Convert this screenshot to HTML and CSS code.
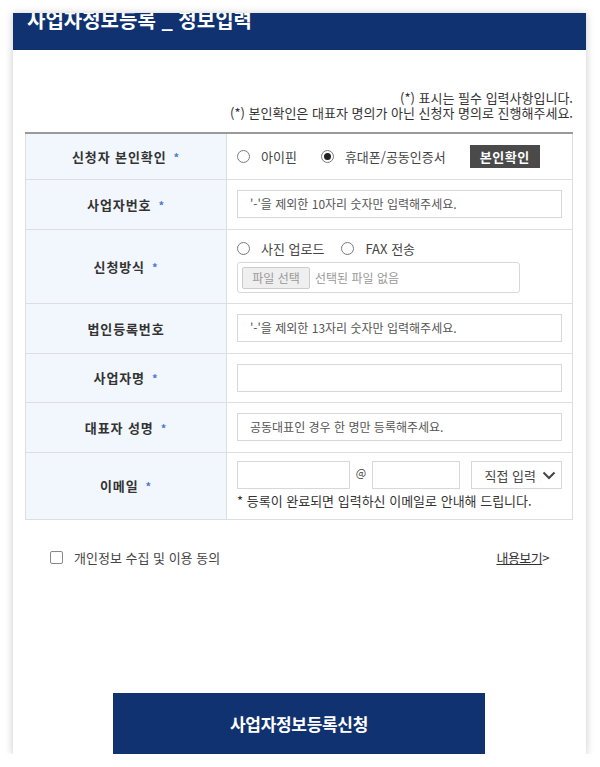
FILE: index.html
```html
<!DOCTYPE html>
<html lang="ko">
<head>
<meta charset="utf-8">
<title>사업자정보등록 _ 정보입력</title>
<link rel="stylesheet" href="styles.css">
</head>
<body>
<div class="card">
  <div class="card-head">
    <h1 class="title">사업자정보등록 _ 정보입력</h1>
  </div>
  <div class="card-body">
    <div class="notes">
      <p>(*) 표시는 필수 입력사항입니다.</p>
      <p>(*) 본인확인은 대표자 명의가 아닌 신청자 명의로 진행해주세요.</p>
    </div>
    <table class="form">
      <tr class="r1">
        <th>신청자 본인확인<span class="req">*</span></th>
        <td>
          <div class="radios">
            <label class="radio-item"><span class="radio"></span>아이핀</label>
            <label class="radio-item"><span class="radio on"></span>휴대폰/공동인증서</label>
            <span class="btn-verify">본인확인</span>
          </div>
        </td>
      </tr>
      <tr class="r2">
        <th>사업자번호<span class="req">*</span></th>
        <td><div class="input ph">'-'을 제외한 10자리 숫자만 입력해주세요.</div></td>
      </tr>
      <tr class="r3">
        <th>신청방식<span class="req">*</span></th>
        <td>
          <div class="radios radios-sm">
            <label class="radio-item"><span class="radio"></span>사진 업로드</label>
            <label class="radio-item"><span class="radio"></span>FAX 전송</label>
          </div>
          <div class="file">
            <span class="file-btn">파일 선택</span>
            <span class="file-name">선택된 파일 없음</span>
          </div>
        </td>
      </tr>
      <tr class="r4">
        <th>법인등록번호</th>
        <td><div class="input ph">'-'을 제외한 13자리 숫자만 입력해주세요.</div></td>
      </tr>
      <tr class="r5">
        <th>사업자명<span class="req">*</span></th>
        <td><div class="input"></div></td>
      </tr>
      <tr class="r6">
        <th>대표자 성명<span class="req">*</span></th>
        <td><div class="input ph">공동대표인 경우 한 명만 등록해주세요.</div></td>
      </tr>
      <tr class="r7">
        <th>이메일<span class="req">*</span></th>
        <td>
          <div class="email">
            <div class="input mail-id"></div>
            <span class="at">@</span>
            <div class="input mail-domain"></div>
            <div class="select">
              <span>직접 입력</span>
              <svg width="14" height="9" viewBox="0 0 14 9"><polyline points="1.5,1.5 7,7 12.5,1.5" fill="none" stroke="#444" stroke-width="2"/></svg>
            </div>
          </div>
          <p class="mail-note">* 등록이 완료되면 입력하신 이메일로 안내해 드립니다.</p>
        </td>
      </tr>
    </table>
    <div class="agree">
      <label class="agree-label"><span class="checkbox"></span>개인정보 수집 및 이용 동의</label>
      <span class="more"><u>내용보기</u>&gt;</span>
    </div>
    <div class="submit-wrap">
      <span class="submit">사업자정보등록신청</span>
    </div>
  </div>
</div>
</body>
</html>
```

FILE: styles.css
```css
* { box-sizing: border-box; }
html, body {
  margin: 0;
  padding: 0;
  background: #fff;
}
body {
  font-family: "Noto Sans CJK KR", "Noto Sans", sans-serif;
  color: #333;
  font-size: 12px;
}
p { margin: 0; }

.card {
  margin: 13px 0 0 13px;
  width: 573px;
  background: #fff;
  box-shadow: 0 1px 8px rgba(0, 0, 0, 0.22);
}
.card-head {
  height: 37px;
  background: #113270;
  overflow: hidden;
}
.title {
  margin: -3px 0 0 0;
  padding-left: 14px;
  font-size: 20px;
  line-height: 20px;
  font-weight: 700;
  color: #fff;
  letter-spacing: 0;
  white-space: nowrap;
}
.card-body {
  padding: 40px 13px 0 12px;
}
.notes {
  text-align: right;
  font-size: 13px;
  line-height: 15px;
  color: #333;
  letter-spacing: 0;
}

.form {
  margin-top: 12px;
  width: 548px;
  border-collapse: collapse;
  border: 1px solid #dedede;
  border-top: 2px solid #9a9a9a;
}
.form th {
  width: 202px;
  background: #f2f6fd;
  border-right: 1px solid #dedede;
  border-bottom: 1px solid #dedede;
  font-size: 13px;
  font-weight: 700;
  color: #333;
  text-align: center;
  padding: 0;
  letter-spacing: 0.9px;
}
.form td {
  border-bottom: 1px solid #dedede;
  padding: 0 10px;
  vertical-align: middle;
}
.req {
  color: #4a78d2;
  font-size: 11px;
  margin-left: 7px;
  font-weight: 700;
}
.r1 { height: 46px; }
.r2 { height: 50px; }
.r3 { height: 74px; }
.r4 { height: 50px; }
.r5 { height: 49px; }
.r6 { height: 50px; }
.r7 { height: 67px; }

.radios {
  display: flex;
  align-items: center;
}
.radio-item {
  display: flex;
  align-items: center;
  font-size: 13px;
  color: #444;
  margin-right: 24px;
}
.radios-sm .radio-item { margin-right: 17px; }
.radio {
  width: 13px;
  height: 13px;
  border: 1px solid #7a7a7a;
  border-radius: 50%;
  margin-right: 11px;
  background: #fff;
  position: relative;
}
.radio.on::after {
  content: "";
  position: absolute;
  left: 2px;
  top: 2px;
  width: 7px;
  height: 7px;
  border-radius: 50%;
  background: #222;
}
.btn-verify {
  background: #4a4a4a;
  color: #fff;
  font-size: 13px;
  font-weight: 700;
  height: 23px;
  line-height: 23px;
  width: 70px;
  text-align: center;
  letter-spacing: 0.5px;
}

.input {
  height: 28px;
  border: 1px solid #d8d8d8;
  background: #fff;
  padding: 0 12px;
  font-size: 12px;
  line-height: 26px;
  color: #555;
  letter-spacing: 0;
}

.file {
  margin-top: 4px;
  width: 283px;
  height: 31px;
  border: 1px solid #d8d8d8;
  border-radius: 3px;
  display: flex;
  align-items: center;
  padding-left: 4px;
}
.file-btn {
  width: 68px;
  height: 22px;
  line-height: 20px;
  border: 1px solid #ccc;
  border-radius: 2px;
  background: #efefef;
  color: #999;
  font-size: 12px;
  text-align: center;
}
.file-name {
  color: #999;
  font-size: 12px;
  margin-left: 5px;
}

.email {
  display: flex;
  align-items: center;
}
.mail-id { width: 113px; }
.at {
  width: 22px;
  text-align: center;
  font-size: 11px;
  color: #444;
  margin-top: -6px;
}
.mail-domain { width: 88px; }
.select {
  margin-left: 11px;
  width: 91px;
  height: 28px;
  border: 1px solid #d8d8d8;
  display: flex;
  align-items: center;
  justify-content: flex-end;
  padding-right: 5px;
  font-size: 13px;
  color: #444;
  gap: 6px;
}
.mail-note {
  margin-top: 3px;
  font-size: 13px;
  color: #333;
  line-height: 18px;
}

.agree {
  margin-top: 28px;
  height: 20px;
  display: flex;
  align-items: center;
  justify-content: space-between;
  padding: 0 24px 0 25px;
}
.agree-label {
  display: flex;
  align-items: center;
  font-size: 13px;
  color: #444;
}
.checkbox {
  width: 13px;
  height: 13px;
  border: 1px solid #888;
  border-radius: 2px;
  margin-right: 11px;
  background: #fff;
}
.more {
  font-size: 13px;
  color: #333;
  letter-spacing: -0.5px;
}

.submit-wrap {
  margin-top: 125px;
  display: flex;
  justify-content: center;
}
.submit {
  display: block;
  width: 372px;
  height: 61px;
  line-height: 61px;
  background: #113270;
  color: #fff;
  font-size: 17px;
  font-weight: 700;
  text-align: center;
  letter-spacing: -0.3px;
}
```
